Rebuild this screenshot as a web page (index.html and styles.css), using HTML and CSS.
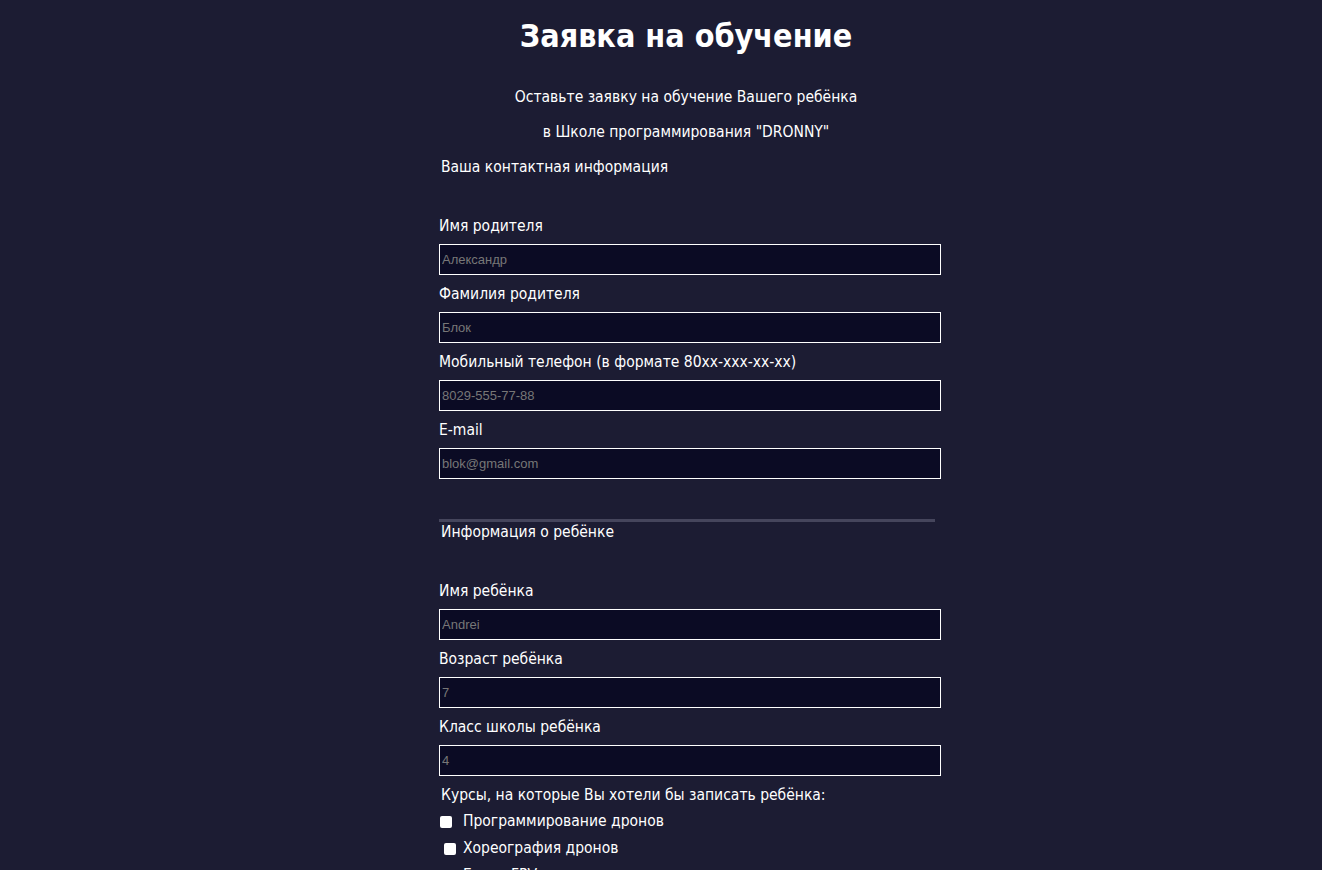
FILE: index.html
```html
<!DOCTYPE html>
<html lang="ru">
<head>
<meta charset="utf-8">
<title>Заявка на обучение</title>
<link rel="stylesheet" href="styles.css">
</head>
<body>
<main class="page">
  <h1 class="title">Заявка на обучение</h1>
  <p class="lead">Оставьте заявку на обучение Вашего ребёнка</p>
  <p class="lead">в Школе программирования "DRONNY"</p>
  <form class="form">
    <div class="section-title">Ваша контактная информация</div>
    <div class="fields">
      <label class="label">Имя родителя</label>
      <input class="field" type="text" placeholder="Александр">
      <label class="label">Фамилия родителя</label>
      <input class="field" type="text" placeholder="Блок">
      <label class="label">Мобильный телефон (в формате 80xx-xxx-xx-xx)</label>
      <input class="field" type="text" placeholder="8029-555-77-88">
      <label class="label">E-mail</label>
      <input class="field" type="text" placeholder="blok@gmail.com">
    </div>
    <div class="divider"></div>
    <div class="section-title section-title--tight">Информация о ребёнке</div>
    <div class="fields">
      <label class="label">Имя ребёнка</label>
      <input class="field" type="text" placeholder="Andrei">
      <label class="label">Возраст ребёнка</label>
      <input class="field" type="text" placeholder="7">
      <label class="label">Класс школы ребёнка</label>
      <input class="field" type="text" placeholder="4">
    </div>
    <div class="courses-title">Курсы, на которые Вы хотели бы записать ребёнка:</div>
    <div class="courses">
      <label class="course"><input class="check" type="checkbox"><span>Программирование дронов</span></label>
      <label class="course course--indent"><input class="check" type="checkbox"><span>Хореография дронов</span></label>
      <label class="course course--indent"><input class="check" type="checkbox"><span>Гонки FPV</span></label>
    </div>
  </form>
</main>
</body>
</html>
```
FILE: styles.css
```css
html, body {
  margin: 0;
  padding: 0;
  background: #1c1c33;
  height: 100%;
  overflow: hidden;
}
body {
  color: #ffffff;
  font-family: "DejaVu Sans Condensed", "DejaVu Sans", sans-serif;
  font-size: 15.5px;
}
.page {
  width: 510px;
  margin: 0 auto;
  padding-left: 50px;
}
.title {
  margin: 17px 0 33px;
  font-size: 32px;
  line-height: 38px;
  font-weight: bold;
  text-align: center;
}
.lead {
  margin: 16px 0;
  line-height: 19px;
  text-align: center;
}
.form {
  padding-left: 8px;
}
.section-title {
  margin: 16px 0 0 2px;
  line-height: 19px;
}
.section-title--tight {
  margin-top: 0;
  padding-top: 1px;
}
.fields {
  display: flex;
  flex-direction: column;
  margin-top: 39px;
}
.section-title--tight + .fields {
  margin-top: 39px;
}
.label {
  display: block;
  line-height: 19px;
  padding-top: 1px;
  margin-bottom: 8px;
}
.field {
  box-sizing: border-box;
  width: 502px;
  height: 31px;
  margin: 0 0 9px;
  padding: 0 2px;
  border: 1px solid #ffffff;
  border-radius: 0;
  background: #0b0b24;
  color: #ffffff;
  font-family: "Liberation Sans", Arial, sans-serif;
  font-size: 13px;
  outline: none;
}
.field::placeholder {
  color: #777777;
}
.divider {
  width: 496px;
  height: 3px;
  margin-top: 31px;
  background: #45455c;
}
.courses-title {
  margin: 0 0 0 2px;
  padding-top: 1px;
  line-height: 19px;
}
.courses {
  display: flex;
  flex-direction: column;
  gap: 8px;
  margin-top: 7px;
}
.course {
  display: flex;
  align-items: center;
  height: 19px;
  line-height: 19px;
}
.check {
  appearance: none;
  -webkit-appearance: none;
  width: 12px;
  height: 12px;
  margin: 0 11px 0 1px;
  border-radius: 2px;
  background: #ffffff;
  flex: none;
}
.course--indent .check {
  margin: 0 7px 0 5px;
}
```
